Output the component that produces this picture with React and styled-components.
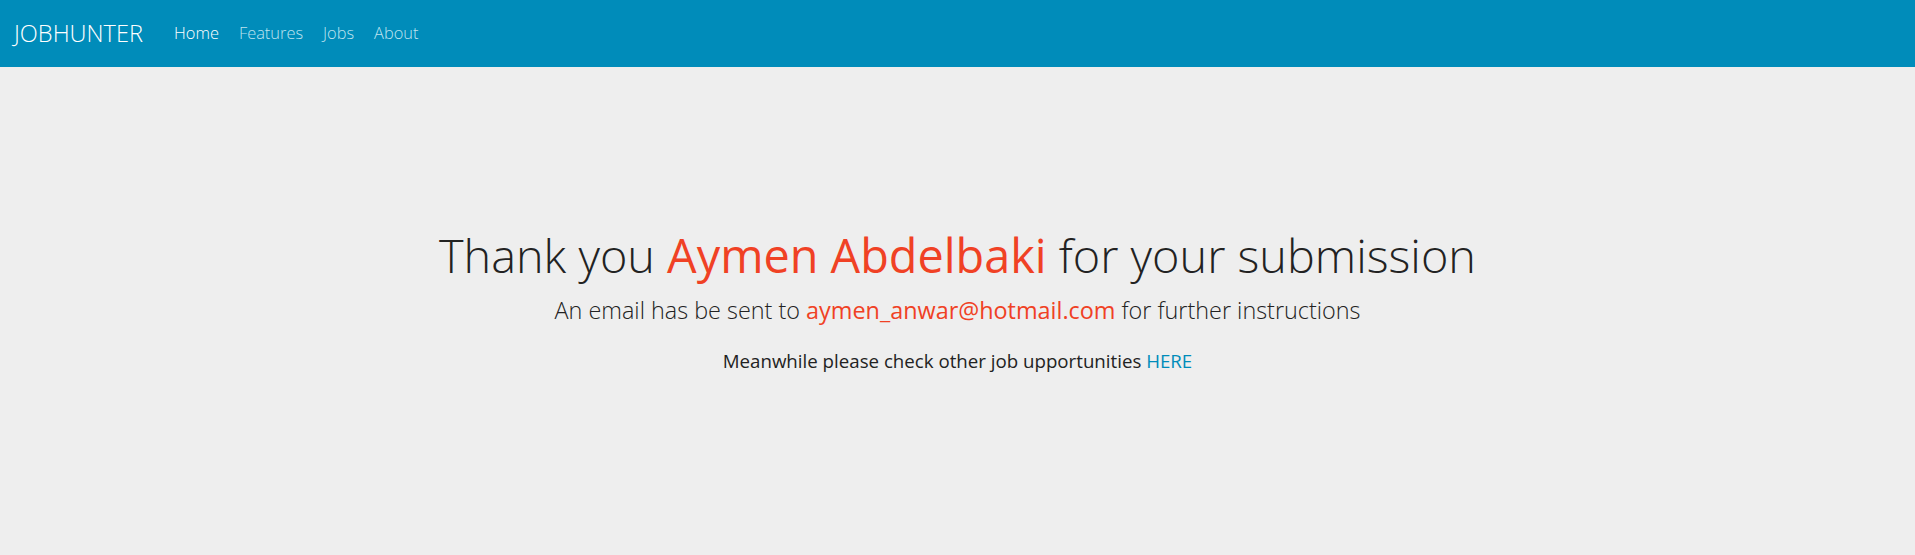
import React from 'react'
import styled, { createGlobalStyle } from 'styled-components'

const GlobalStyle = createGlobalStyle`
    html, body {
        margin: 0;
        padding: 0;
        background: #eeeeee;
        font-family: "Open Sans", "Liberation Sans", sans-serif;
        color: #222222;
    }
`

const Page = styled.div`
    min-height: 555px;
    background: #eeeeee;
`

const Navbar = styled.nav`
    height: 67px;
    background: #008cba;
    display: flex;
    align-items: center;
    padding: 0 14px;
    box-sizing: border-box;
`

const Brand = styled.a`
    font-size: 23.6px;
    font-weight: 300;
    color: #ffffff;
    text-decoration: none;
    margin-right: 21px;
    margin-top: -2px;
`

const NavList = styled.ul`
    list-style-type: none;
    display: flex;
    margin: -2px 0 0;
    padding: 0;
`

const NavLink = styled.a`
    display: block;
    padding: 0 10px;
    font-size: 16.4px;
    font-weight: 300;
    text-decoration: none;
    color: ${props => (props.$active ? '#ffffff' : '#bfe3ef')};
`

const Main = styled.main`
    padding-top: 163px;
    text-align: center;
`

const Title = styled.h1`
    margin: 0;
    font-size: 46.8px;
    font-weight: 300;
    line-height: 1.1;
    color: #222222;
`

const Subtitle = styled.h3`
    margin: 17px 0 0;
    font-size: 23.4px;
    font-weight: 300;
    line-height: 1.1;
    color: #222222;
`

const Note = styled.p`
    margin: 24px 0 0;
    font-size: 18.7px;
    font-weight: 400;
    line-height: 1.4;
    color: #222222;
`

const Highlight = styled.span`
    color: #f04124;
    font-weight: 400;
`

const HereLink = styled.a`
    color: #008cba;
    text-decoration: none;
`

const links = ['Home', 'Features', 'Jobs', 'About']

const App = () => {
    return (
        <Page>
            <GlobalStyle />
            <Navbar>
                <Brand href="#">JOBHUNTER</Brand>
                <NavList>
                    {links.map((label, i) => (
                        <li key={label}>
                            <NavLink href="#" $active={i === 0}>{label}</NavLink>
                        </li>
                    ))}
                </NavList>
            </Navbar>

            <Main>
                <Title>
                    Thank you <Highlight>Aymen Abdelbaki</Highlight> for your submission
                </Title>
                <Subtitle>
                    An email has be sent to <Highlight>aymen_anwar@hotmail.com</Highlight> for further instructions
                </Subtitle>
                <Note>
                    Meanwhile please check other job upportunities <HereLink href="#">HERE</HereLink>
                </Note>
            </Main>
        </Page>
    )
}

export default App
